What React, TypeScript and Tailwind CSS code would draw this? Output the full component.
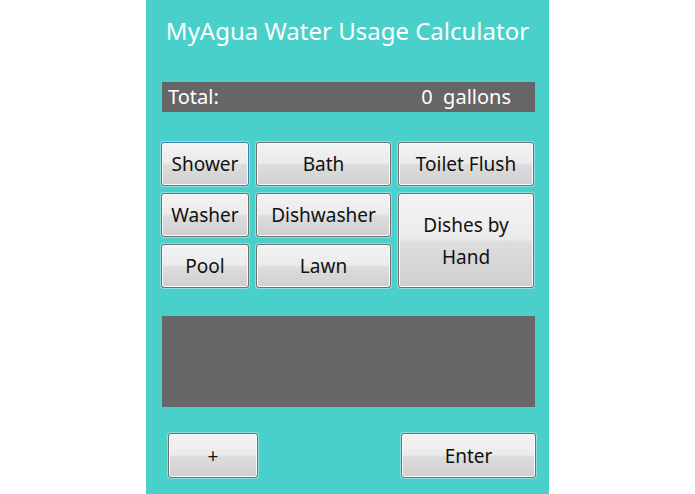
const font = { fontFamily: '"Noto Sans", "DejaVu Sans", sans-serif' };

const btn =
  'flex items-center justify-center rounded-[3px] border text-[19px] text-[#111111] leading-[32px] text-center shadow-[inset_0_0_0_1px_#fbfbfb,0_0_0_1px_#8fe0dc] bg-[linear-gradient(to_bottom,#f3f3f3_0%,#ebebeb_48%,#dddddd_52%,#cfcfcf_100%)]';

function Btn({
  label,
  className = '',
  focused = false,
}: {
  label: React.ReactNode;
  className?: string;
  focused?: boolean;
}) {
  return (
    <button
      type="button"
      className={`${btn} ${focused ? 'border-[#3c7fb1]' : 'border-[#707070]'} ${className}`}
    >
      {label}
    </button>
  );
}

export default function App() {
  return (
    <div className="flex min-h-[494px] w-full justify-center bg-white" style={font}>
      <div className="flex h-[494px] w-[403px] flex-col bg-[#49d0cb] pt-[16px]">
        <h1 className="h-[30px] text-center text-[24px] leading-[30px] text-white">
          MyAgua Water Usage Calculator
        </h1>

        <div className="ml-[16px] mt-[36px] flex h-[30px] w-[373px] items-center justify-between bg-[#666666] pl-[6px] pr-[24px] text-[20px] text-white">
          <span>Total:</span>
          <span>0&nbsp;&nbsp;gallons</span>
        </div>

        <div className="ml-[15px] mt-[30px] grid grid-cols-[88px_135px_136px] grid-rows-[44px_44px_44px] gap-x-[7px] gap-y-[7px]">
          <Btn label="Shower" focused />
          <Btn label="Bath" />
          <Btn label="Toilet Flush" />
          <Btn label="Washer" />
          <Btn label="Dishwasher" />
          <Btn
            label={
              <span>
                Dishes by
                <br />
                Hand
              </span>
            }
            className="row-span-2"
          />
          <Btn label="Pool" />
          <Btn label="Lawn" />
        </div>

        <div className="ml-[16px] mt-[28px] h-[91px] w-[373px] bg-[#676767]" />

        <div className="mt-[26px] flex">
          <Btn label="+" className="ml-[22px] h-[45px] w-[90px]" />
          <Btn label="Enter" className="ml-[143px] h-[45px] w-[135px]" />
        </div>
      </div>
    </div>
  );
}
